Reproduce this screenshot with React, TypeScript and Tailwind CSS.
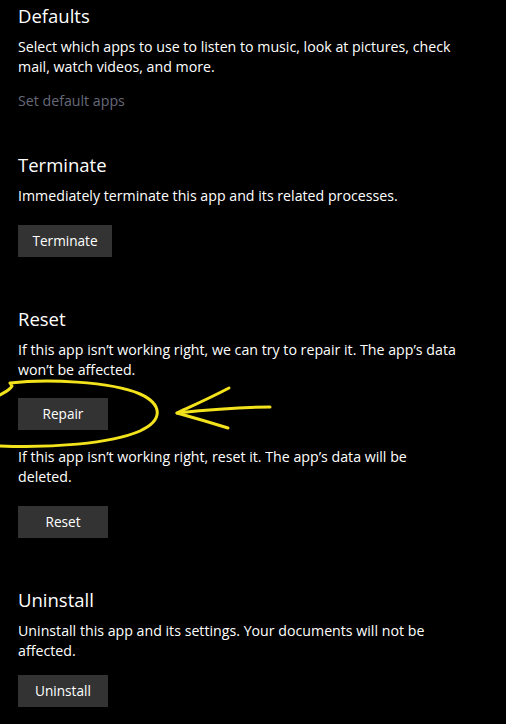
const font = { fontFamily: '"Open Sans", "Noto Sans", sans-serif' }

function Heading({ children }: { children: React.ReactNode }) {
  return <h2 className="text-[18.5px] leading-[28px] font-normal text-white">{children}</h2>
}

function Desc({ children, className = "mt-[7px]" }: { children: React.ReactNode; className?: string }) {
  return <p className={`text-[14.2px] leading-[20px] text-white ${className}`}>{children}</p>
}

function WinButton({ label, className = "" }: { label: string; className?: string }) {
  return (
    <button
      type="button"
      className={`h-[32px] min-w-[90px] px-[14px] bg-[#333333] text-white text-[13.6px] leading-[20px] ${className}`}
    >
      {label}
    </button>
  )
}

export default function App() {
  return (
    <div className="relative w-[506px] h-[724px] bg-black overflow-hidden" style={font}>
      <div className="pl-[18px] pr-[24px] pt-[2px] flex flex-col items-start">
        {/* Defaults */}
        <Heading>Defaults</Heading>
        <Desc>
          Select which apps to use to listen to music, look at pictures, check mail, watch videos, and more.
        </Desc>
        <a className="mt-[14px] text-[14.2px] leading-[20px] text-[#666a78]">Set default apps</a>

        {/* Terminate */}
        <div className="mt-[40px]">
          <Heading>Terminate</Heading>
        </div>
        <Desc>Immediately terminate this app and its related processes.</Desc>
        <WinButton label="Terminate" className="mt-[19px] w-[94px]" />

        {/* Reset */}
        <div className="mt-[48px]">
          <Heading>Reset</Heading>
        </div>
        <Desc>
          If this app isn’t working right, we can try to repair it. The app’s data won’t be affected.
        </Desc>
        <WinButton label="Repair" className="mt-[18px]" />
        <Desc className="mt-[17px] max-w-[410px]">
          If this app isn’t working right, reset it. The app’s data will be deleted.
        </Desc>
        <WinButton label="Reset" className="mt-[19px]" />

        {/* Uninstall */}
        <div className="mt-[48px]">
          <Heading>Uninstall</Heading>
        </div>
        <Desc>Uninstall this app and its settings. Your documents will not be affected.</Desc>
        <WinButton label="Uninstall" className="mt-[14px]" />
      </div>

      {/* yellow hand-drawn annotation */}
      <svg
        className="absolute left-0 top-0 pointer-events-none"
        width="506"
        height="724"
        viewBox="0 0 506 724"
        fill="none"
        stroke="#f3e31c"
        strokeWidth="3"
        strokeLinecap="round"
        strokeLinejoin="round"
      >
        <path d="M0 395 C5 392 10 390 12 386 L10 383 C45 379 110 381 140 394 C162 404 164 420 140 431 C110 444 50 448 0 446" />
        <path d="M229 388 C210 398 192 406 177 413 C195 418 212 423 228 428" />
        <path d="M177 413 C205 410 240 407 270 407" />
      </svg>
    </div>
  )
}
